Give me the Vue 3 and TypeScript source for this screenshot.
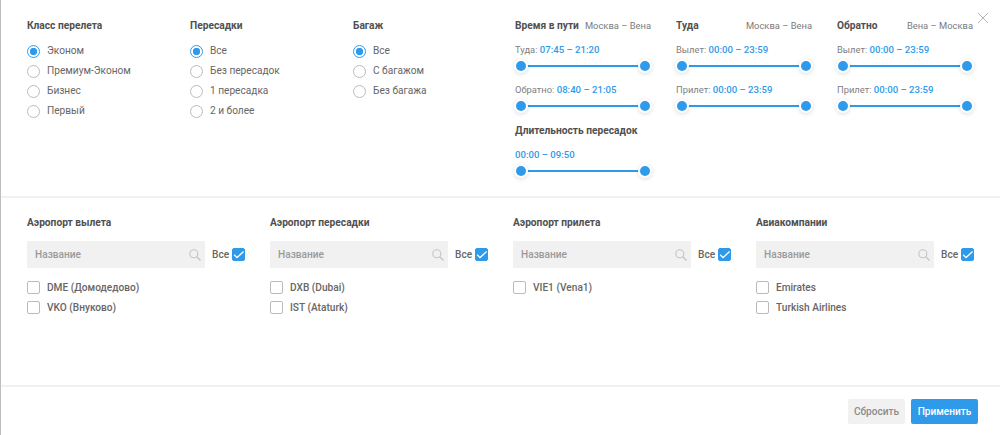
<script setup lang="ts">
interface RadioGroup { title: string; width: number; options: string[] }
interface Slider { label: string; value: string }
interface TimeCol { title: string; route: string; sliders: Slider[] }
interface AirCol { title: string; items: string[] }

const radioGroups: RadioGroup[] = [
  { title: 'Класс перелета', width: 163, options: ['Эконом', 'Премиум-Эконом', 'Бизнес', 'Первый'] },
  { title: 'Пересадки', width: 163, options: ['Все', 'Без пересадок', '1 пересадка', '2 и более'] },
  { title: 'Багаж', width: 162, options: ['Все', 'С багажом', 'Без багажа'] },
]
const timeCols: TimeCol[] = [
  { title: 'Время в пути', route: 'Москва – Вена', sliders: [
    { label: 'Туда: ', value: '07:45 – 21:20' },
    { label: 'Обратно: ', value: '08:40 – 21:05' },
  ] },
  { title: 'Туда', route: 'Москва – Вена', sliders: [
    { label: 'Вылет: ', value: '00:00 – 23:59' },
    { label: 'Прилет: ', value: '00:00 – 23:59' },
  ] },
  { title: 'Обратно', route: 'Вена – Москва', sliders: [
    { label: 'Вылет: ', value: '00:00 – 23:59' },
    { label: 'Прилет: ', value: '00:00 – 23:59' },
  ] },
]
const airCols: AirCol[] = [
  { title: 'Аэропорт вылета', items: ['DME (Домодедово)', 'VKO (Внуково)'] },
  { title: 'Аэропорт пересадки', items: ['DXB (Dubai)', 'IST (Ataturk)'] },
  { title: 'Аэропорт прилета', items: ['VIE1 (Vena1)'] },
  { title: 'Авиакомпании', items: ['Emirates', 'Turkish Airlines'] },
]
</script>

<template>
  <div class="modal">
    <button class="close" aria-label="Закрыть">
      <svg width="12" height="12" viewBox="0 0 12 12"><path d="M1 1 L11 11 M11 1 L1 11" stroke="#b5b5b5" stroke-width="1" fill="none" /></svg>
    </button>

    <section class="top">
      <div v-for="g in radioGroups" :key="g.title" class="radio-col" :style="{ width: g.width + 'px' }">
        <h3 class="title">{{ g.title }}</h3>
        <ul class="radios">
          <li v-for="(o, i) in g.options" :key="o" class="radio-row">
            <span class="radio" :class="{ on: i === 0 }"></span>
            <span>{{ o }}</span>
          </li>
        </ul>
      </div>

      <div class="time-area">
        <div v-for="(c, ci) in timeCols" :key="c.title" class="time-col">
          <div class="time-head">
            <h3 class="title">{{ c.title }}</h3>
            <span class="route">{{ c.route }}</span>
          </div>
          <div v-for="s in c.sliders" :key="s.label" class="slider-block">
            <div class="slider-label">{{ s.label }}<b>{{ s.value }}</b></div>
            <div class="slider"><i class="knob"></i><i class="knob"></i></div>
          </div>
          <template v-if="ci === 0">
            <h3 class="title sub">Длительность пересадок</h3>
            <div class="slider-block">
              <div class="slider-label"><b>00:00 – 09:50</b></div>
              <div class="slider"><i class="knob"></i><i class="knob"></i></div>
            </div>
          </template>
        </div>
      </div>
    </section>

    <section class="middle">
      <div v-for="a in airCols" :key="a.title" class="air-col">
        <h3 class="title">{{ a.title }}</h3>
        <div class="search-row">
          <div class="search">
            <span class="placeholder">Название</span>
            <svg width="12" height="12" viewBox="0 0 12 12"><circle cx="4.8" cy="4.8" r="4" stroke="#c4c4c4" stroke-width="1.1" fill="none" /><path d="M7.8 7.8 L11.5 11.5" stroke="#c4c4c4" stroke-width="1.3" /></svg>
          </div>
          <span class="all">Все</span>
          <span class="check on">
            <svg width="13" height="13" viewBox="0 0 13 13"><path d="M2.2 6.8 L5 9.6 L11.6 3.6" stroke="#fff" stroke-width="1.3" fill="none" /></svg>
          </span>
        </div>
        <ul class="checks">
          <li v-for="it in a.items" :key="it" class="check-row">
            <span class="check"></span>
            <span>{{ it }}</span>
          </li>
        </ul>
      </div>
    </section>

    <footer class="footer">
      <button class="btn reset">Сбросить</button>
      <button class="btn apply">Применить</button>
    </footer>
  </div>
</template>

<style>
html, body { margin: 0; background: #fff; }
</style>

<style scoped>
* { box-sizing: border-box; }
.modal {
  position: relative;
  width: 1000px;
  height: 435px;
  background: #fff;
  border-left: 1px solid #bdbdbd;
  font-family: Roboto, "Noto Sans", sans-serif;
  font-size: 10.15px;
  color: #555;
  display: flex;
  flex-direction: column;
}
.close {
  position: absolute;
  top: 12px;
  left: 976px;
  width: 12px;
  height: 12px;
  padding: 0;
  border: 0;
  background: none;
  display: block;
}
.close svg { display: block; }
.title {
  margin: 0;
  font-size: 10.2px;
  line-height: 13px;
  font-weight: 700;
  color: #505050;
  white-space: nowrap;
}
ul { list-style: none; margin: 0; padding: 0; }

.top {
  height: 198px;
  padding: 19px 0 0 26px;
  display: flex;
  border-bottom: 2px solid #f1f1f1;
}
.radios { margin-top: 9px; }
.radio-row {
  height: 20px;
  display: flex;
  align-items: center;
  gap: 7px;
  line-height: 20px;
  color: #666;
}
.radio {
  width: 13px;
  height: 13px;
  border-radius: 50%;
  border: 1.3px solid #bbb;
  flex: none;
  background: #fff;
}
.radio.on {
  border-color: #2f9ae9;
  background: radial-gradient(circle, #2f9ae9 0 3.4px, #fff 4px);
}

.time-area { display: flex; gap: 25px; }
.time-col { width: 136px; }
.time-head { display: flex; justify-content: space-between; }
.route { font-size: 9.4px; line-height: 13px; color: #7b7b7b; white-space: nowrap; }
.slider-block { margin-top: 11px; height: 29px; }
.slider-label { line-height: 13px; font-size: 9.4px; color: #808080; white-space: nowrap; }
.slider-label b { font-size: 9.6px; font-weight: 500; color: #2f9ae9; }
.slider {
  margin-top: 4px;
  height: 12px;
  display: flex;
  justify-content: space-between;
  align-items: center;
  padding: 0 1px;
  background: linear-gradient(#2f9ae9, #2f9ae9) center / 100% 2px no-repeat;
  background-origin: content-box;
}
.knob {
  width: 10px;
  height: 10px;
  border-radius: 50%;
  background: #2f9ae9;
  box-shadow: 0 0 0 2px #fff, 0 1px 4px 2px rgba(0, 0, 0, 0.14);
}
.sub { margin-top: 12px; }

.middle {
  flex: 1;
  display: flex;
  padding: 18px 0 0 26px;
}
.air-col { width: 243px; }
.search-row { display: flex; align-items: center; margin-top: 12px; height: 27px; }
.search {
  width: 178px;
  height: 27px;
  background: #f1f1f1;
  border-radius: 1px;
  display: flex;
  align-items: center;
  justify-content: space-between;
  padding: 0 4px 0 8px;
  margin-right: 7px;
}
.placeholder { color: #9a9a9a; font-weight: 500; }
.all { color: #666; font-weight: 500; margin-right: 3px; }
.check {
  width: 13px;
  height: 13px;
  border: 1px solid #bbb;
  border-radius: 2px;
  background: #fff;
  flex: none;
  display: block;
}
.check svg { display: block; margin: -1px; }
.check.on { background: #2f9ae9; border-color: #2f9ae9; }
.checks { margin-top: 9px; }
.check-row {
  height: 20px;
  display: flex;
  align-items: center;
  gap: 7px;
  font-weight: 500;
  color: #666;
}

.footer {
  height: 50px;
  border-top: 2px solid #f1f1f1;
  display: flex;
  justify-content: flex-end;
  gap: 6px;
  padding: 12px 22px 0 0;
}
.btn {
  height: 25px;
  border: 0;
  border-radius: 2px;
  font-family: inherit;
  font-size: 10.1px;
  font-weight: 500;
  padding: 0;
}
.reset { width: 57px; background: #f1f1f1; color: #8c8c8c; }
.apply { width: 67px; background: #2f9ae9; color: #fff; }
</style>
